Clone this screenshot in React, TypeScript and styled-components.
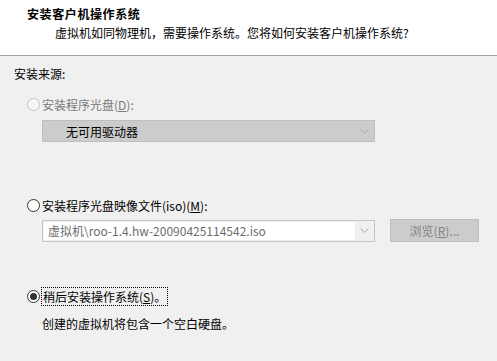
import * as React from 'react'
import styled, { createGlobalStyle } from 'styled-components'

const GlobalStyle = createGlobalStyle`
  html, body {
    margin: 0;
    padding: 0;
    background: #f0f0f0;
  }
  body {
    font-family: "Noto Sans CJK SC", "Noto Sans", "Liberation Sans", sans-serif;
    font-size: 12px;
    color: #000;
  }
`

const Page = styled.div`
  width: 497px;
  height: 361px;
  display: flex;
  flex-direction: column;
  background: #f0f0f0;
  overflow: hidden;
`

const Header = styled.div`
  height: 56px;
  box-sizing: border-box;
  background: #fff;
  border-bottom: 1px solid #a0a0a0;
  padding: 5px 0 0 27px;
  display: flex;
  flex-direction: column;
`

const Title = styled.div`
  font-weight: bold;
  line-height: 17px;
  letter-spacing: 0.6px;
`

const Subtitle = styled.div`
  line-height: 17px;
  margin-top: 2px;
  padding-left: 28px;
`

const Body = styled.div`
  display: flex;
  flex-direction: column;
  padding: 9px 0 0 14px;
`

const SectionLabel = styled.div`
  line-height: 17px;
`

const Option = styled.div<{ $top: number }>`
  display: flex;
  flex-direction: column;
  margin-top: ${p => p.$top}px;
  padding-left: 13px;
`

const RadioRow = styled.label<{ $disabled?: boolean }>`
  display: flex;
  align-items: center;
  gap: 2px;
  line-height: 17px;
  color: ${p => (p.$disabled ? '#7a7a7a' : '#000')};
`

const RadioCircle = styled.span<{ $disabled?: boolean; $checked?: boolean }>`
  width: 13px;
  height: 13px;
  box-sizing: border-box;
  border-radius: 50%;
  border: 1px solid ${p => (p.$disabled ? '#c4c4c4' : '#333')};
  background: ${p => (p.$disabled ? '#f7f7f7' : '#fff')};
  display: flex;
  align-items: center;
  justify-content: center;
  flex-shrink: 0;
  &::after {
    content: '';
    width: 7px;
    height: 7px;
    border-radius: 50%;
    background: #333;
    display: ${p => (p.$checked ? 'block' : 'none')};
  }
`

const Focus = styled.span`
  outline: 1px dotted #000;
  outline-offset: 0;
  padding: 0 1px;
`

const Key = styled.span`
  text-decoration: underline;
`

const Controls = styled.div<{ $top: number }>`
  display: flex;
  align-items: center;
  gap: 15px;
  margin-top: ${p => p.$top}px;
  padding-left: 15px;
`

const Select = styled.div<{ $variant: 'disabled' | 'edit' }>`
  width: 333px;
  height: 22px;
  box-sizing: border-box;
  display: flex;
  align-items: center;
  border: 1px solid ${p => (p.$variant === 'disabled' ? '#bfbfbf' : '#c5c5c5')};
  background: ${p => (p.$variant === 'disabled' ? '#cccccc' : '#f0f0f0')};
`

const SelectText = styled.div<{ $variant: 'disabled' | 'edit' }>`
  flex: 1;
  align-self: stretch;
  display: flex;
  align-items: center;
  margin: ${p => (p.$variant === 'edit' ? '1px 0 1px 1px' : '0')};
  padding-left: ${p => (p.$variant === 'edit' ? '4px' : '23px')};
  background: ${p => (p.$variant === 'edit' ? '#fff' : 'transparent')};
  color: ${p => (p.$variant === 'edit' ? '#6d6d6d' : '#000')};
  white-space: nowrap;
`

const Arrow = styled.div`
  width: 19px;
  display: flex;
  align-items: center;
  justify-content: center;
`

const BrowseButton = styled.div`
  width: 89px;
  height: 23px;
  box-sizing: border-box;
  border: 1px solid #bfbfbf;
  background: #cccccc;
  color: #838383;
  display: flex;
  align-items: center;
  justify-content: center;
`

const Description = styled.div`
  line-height: 17px;
  margin-top: 10px;
  padding-left: 15px;
`

const Chevron = () => (
  <svg width='9' height='5' viewBox='0 0 9 5'>
    <path d='M0.5 0.5 L4.5 4.5 L8.5 0.5' fill='none' stroke='#a6a6a6' strokeWidth='1' />
  </svg>
)

const App = () => {
  return (
    <Page>
      <GlobalStyle />
      <Header>
        <Title>安装客户机操作系统</Title>
        <Subtitle>虚拟机如同物理机，需要操作系统。您将如何安装客户机操作系统?</Subtitle>
      </Header>
      <Body>
        <SectionLabel>安装来源:</SectionLabel>
        <Option $top={14}>
          <RadioRow $disabled>
            <RadioCircle $disabled />
            <span>安装程序光盘(<Key>D</Key>):</span>
          </RadioRow>
          <Controls $top={7}>
            <Select $variant='disabled'>
              <SelectText $variant='disabled'>无可用驱动器</SelectText>
              <Arrow><Chevron /></Arrow>
            </Select>
          </Controls>
        </Option>
        <Option $top={55}>
          <RadioRow>
            <RadioCircle />
            <span>安装程序光盘映像文件(iso)(<Key>M</Key>):</span>
          </RadioRow>
          <Controls $top={5}>
            <Select $variant='edit'>
              <SelectText $variant='edit'>虚拟机\roo-1.4.hw-20090425114542.iso</SelectText>
              <Arrow><Chevron /></Arrow>
            </Select>
            <BrowseButton>浏览(<Key>R</Key>)...</BrowseButton>
          </Controls>
        </Option>
        <Option $top={46}>
          <RadioRow>
            <RadioCircle $checked />
            <Focus>稍后安装操作系统(<Key>S</Key>)。</Focus>
          </RadioRow>
          <Description>创建的虚拟机将包含一个空白硬盘。</Description>
        </Option>
      </Body>
    </Page>
  )
}

export default App
